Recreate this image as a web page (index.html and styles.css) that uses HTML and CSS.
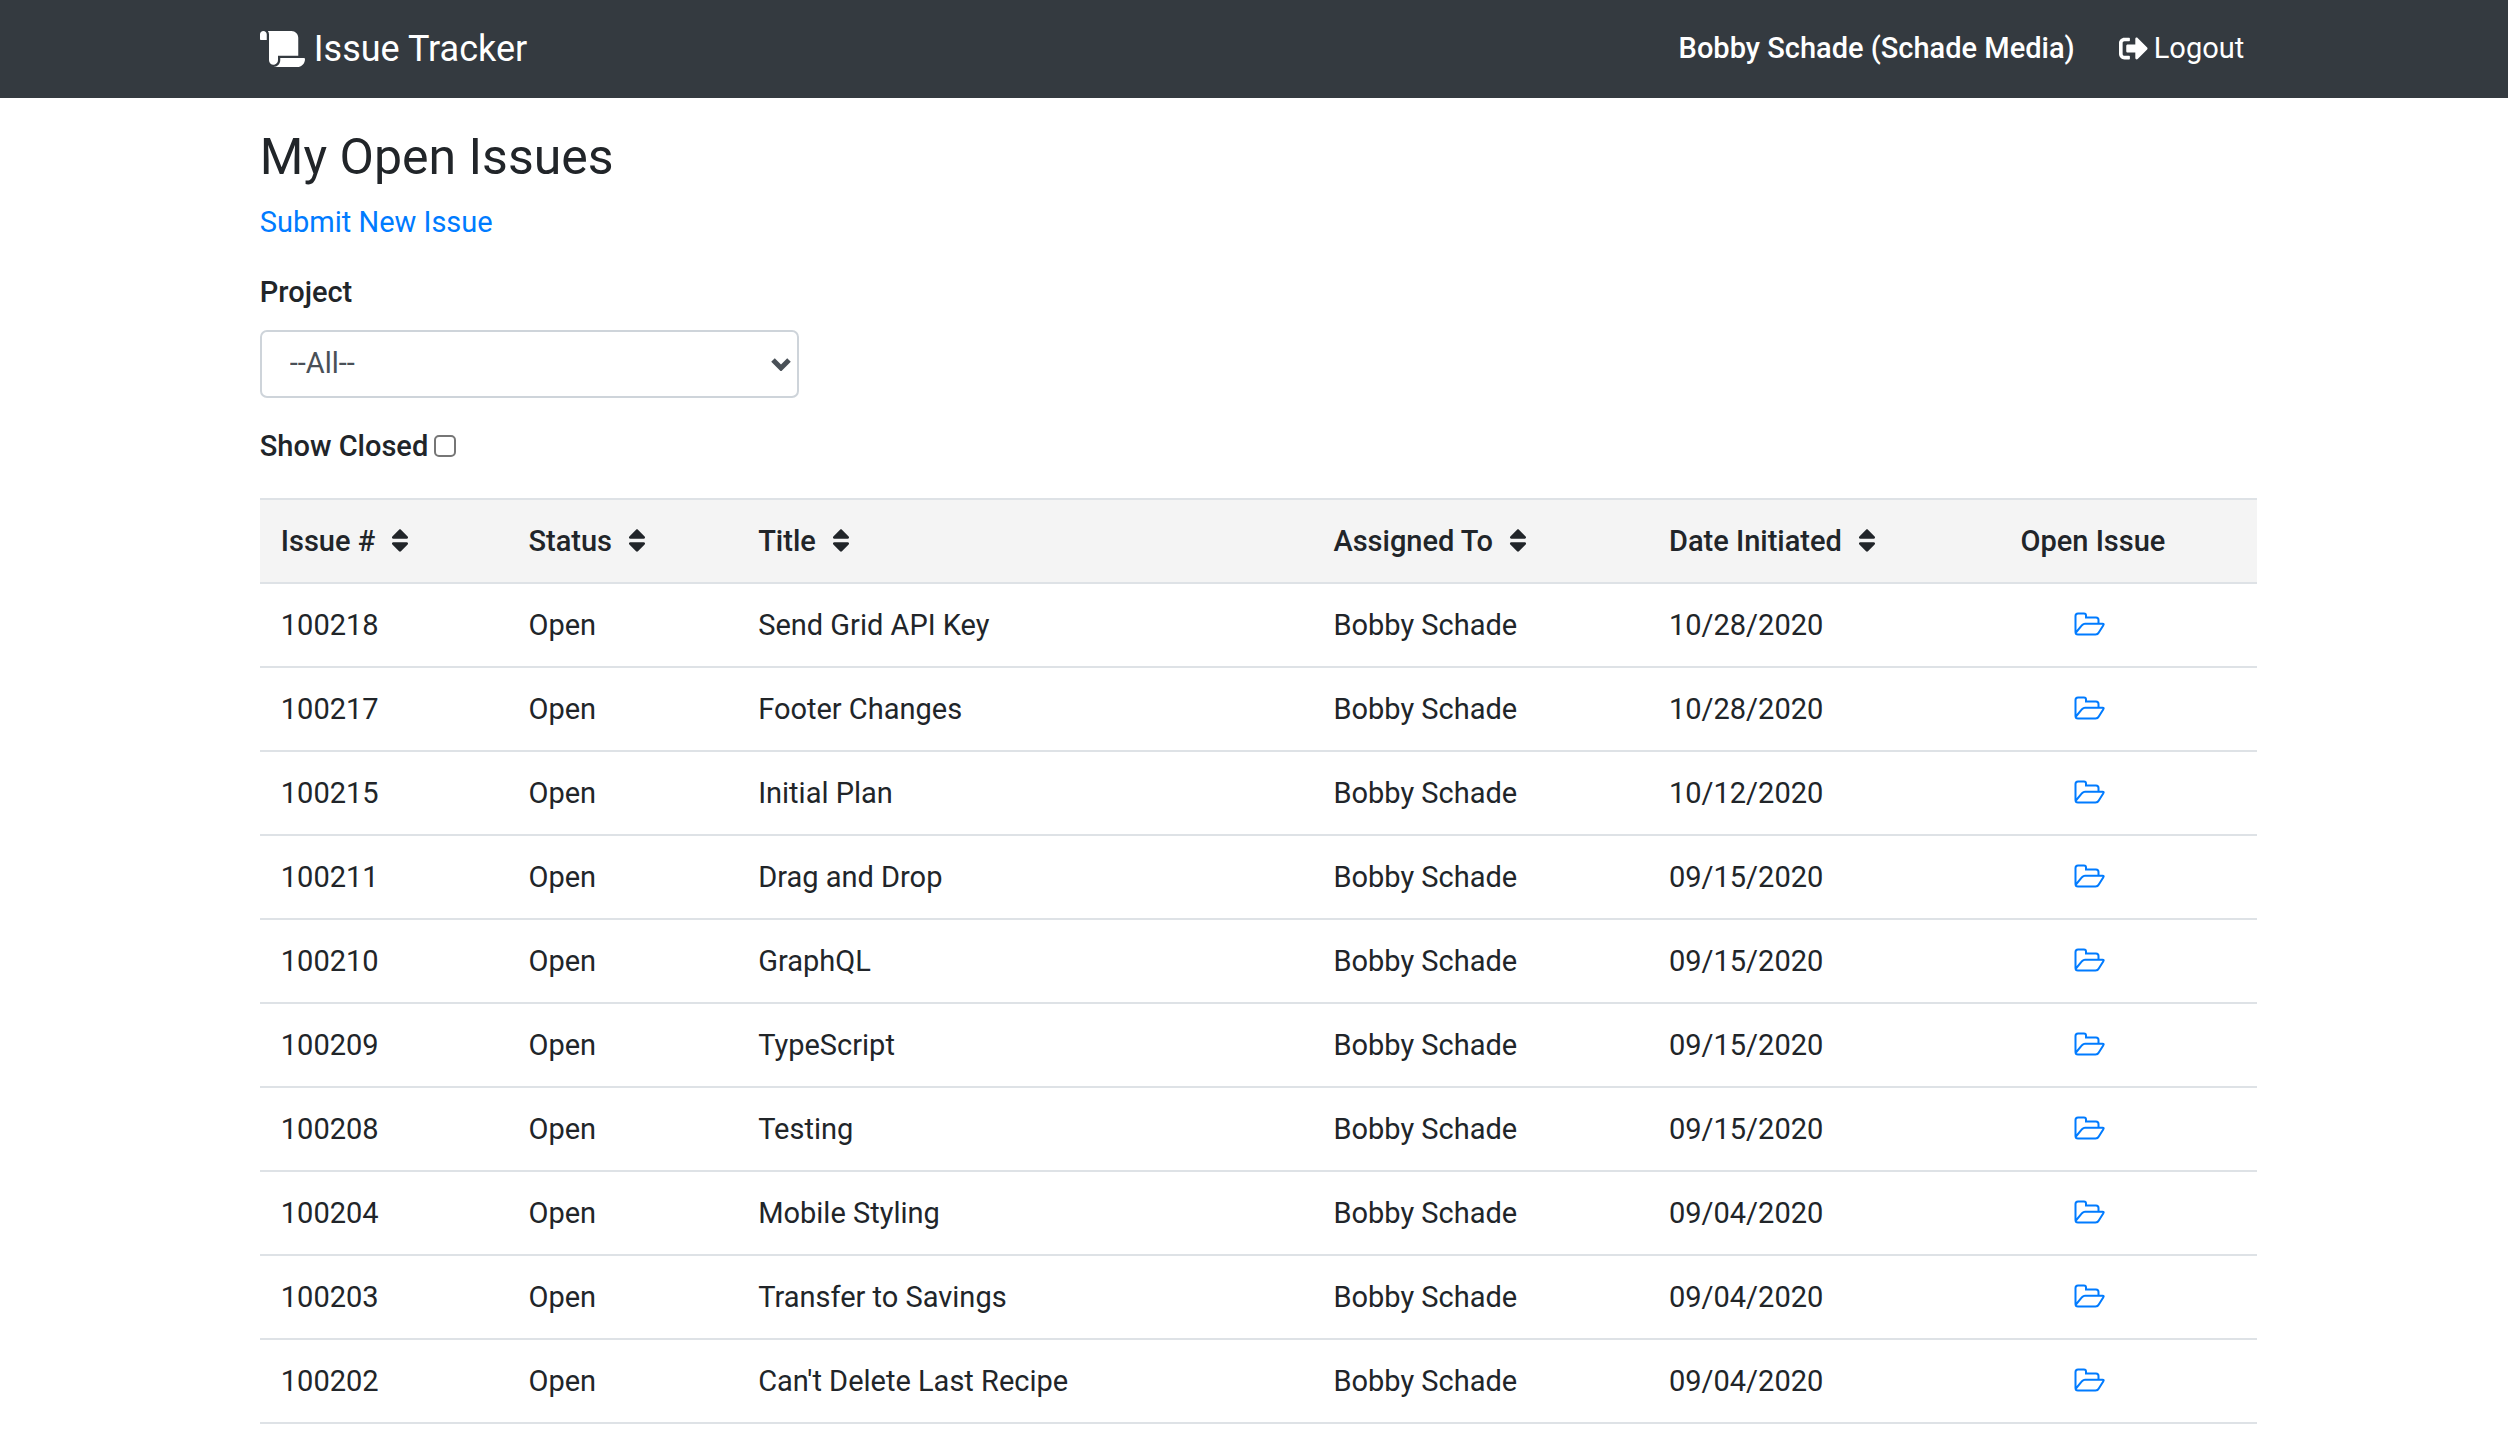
FILE: index.html
```html
<!DOCTYPE html>
<html lang="en">
<head>
<meta charset="utf-8">
<title>Issue Tracker</title>
<link rel="stylesheet" href="styles.css">
</head>
<body>
<svg class="sprite" aria-hidden="true">
  <symbol id="sort" viewBox="0 0 320 512"><path d="M41 288h238c21.400 0 32.100 25.900 17 41L177 448c-9.400 9.400-24.600 9.400-33.900 0L24 329c-15.100-15.100-4.400-41 17-41zm255-105L177 64c-9.400-9.400-24.600-9.400-33.900 0L24 183c-15.100 15.100-4.400 41 17 41h238c21.400 0 32.100-25.900 17-41z"/></symbol>
  <symbol id="folder" viewBox="0 0 31 24"><path d="M1.500 20V4Q1.500 1.500 4 1.500h6Q12 1.500 12 3.500V5.500H22Q24.500 5.500 24.500 8V11.500M1.500 21L8 13.200Q9.400 11.700 11 11.700H28.500Q30.500 11.700 29.200 13.500L24.800 20.500Q23.800 22.500 21.500 22.500H4Q1.500 22.500 1.500 20"/></symbol>
</svg>
<header class="navbar">
  <div class="container navbar-row">
    <a class="brand" href="#">
      <svg class="icon-scroll" viewBox="0 0 640 512" aria-hidden="true"><path d="M48 0C21.530 0 0 21.530 0 48v64c0 8.840 7.160 16 16 16h80V48C96 21.530 74.470 0 48 0zm208 412.570V352h288V96c0-52.940-43.060-96-96-96H111.590C121.740 13.410 128 29.920 128 48v368c0 38.870 34.650 69.650 74.750 63.120C234.220 474 256 444.460 256 412.570zM288 384v32c0 52.930-43.060 96-96 96h336c61.860 0 112-50.140 112-112 0-8.840-7.160-16-16-16H288z"/></svg>
      Issue Tracker
    </a>
    <nav class="user-nav">
      <span class="user">Bobby Schade (Schade Media)</span>
      <a class="logout" href="#">
        <svg class="icon-logout" viewBox="0 0 512 512" aria-hidden="true"><path d="M497 273L329 441c-15 15-41 4.500-41-17v-96H152c-13.300 0-24-10.700-24-24v-96c0-13.300 10.700-24 24-24h136V88c0-21.400 25.900-32 41-17l168 168c9.300 9.400 9.300 24.600 0 34zM192 436v-40c0-6.600-5.400-12-12-12H96c-17.700 0-32-14.300-32-32V160c0-17.700 14.300-32 32-32h84c6.600 0 12-5.400 12-12V76c0-6.600-5.400-12-12-12H96c-53 0-96 43-96 96v192c0 53 43 96 96 96h84c6.600 0 12-5.400 12-12z"/></svg>
        Logout
      </a>
    </nav>
  </div>
</header>
<main class="container">
  <h1 class="title">My Open Issues</h1>
  <a class="link" href="#">Submit New Issue</a>
  <div class="field">
    <label class="label" for="project">Project</label>
    <div class="select-wrap">
      <select class="select" id="project"><option>--All--</option></select>
      <svg class="chevron" viewBox="0 0 20 14" aria-hidden="true"><path d="M2 3l8 8 8-8"/></svg>
    </div>
  </div>
  <div class="check">
    <label class="label" for="closed">Show Closed</label>
    <input class="checkbox" id="closed" type="checkbox">
  </div>
  <table class="issues">
    <colgroup><col class="col-id"><col class="col-status"><col class="col-title"><col class="col-assigned"><col class="col-date"><col class="col-open"></colgroup>
    <thead>
      <tr>
        <th scope="col">Issue #<button class="sort" type="button" aria-label="Sort by issue number"><svg class="icon-sort"><use href="#sort"/></svg></button></th>
        <th scope="col">Status<button class="sort" type="button" aria-label="Sort by status"><svg class="icon-sort"><use href="#sort"/></svg></button></th>
        <th scope="col">Title<button class="sort" type="button" aria-label="Sort by title"><svg class="icon-sort"><use href="#sort"/></svg></button></th>
        <th scope="col">Assigned To<button class="sort" type="button" aria-label="Sort by assignee"><svg class="icon-sort"><use href="#sort"/></svg></button></th>
        <th scope="col">Date Initiated<button class="sort" type="button" aria-label="Sort by date"><svg class="icon-sort"><use href="#sort"/></svg></button></th>
        <th scope="col">Open Issue</th>
      </tr>
    </thead>
    <tbody>
      <tr><td>100218</td><td>Open</td><td>Send Grid API Key</td><td>Bobby Schade</td><td>10/28/2020</td><td class="open"><a class="open-link" href="#" aria-label="Open issue 100218"><svg class="icon-folder"><use href="#folder"/></svg></a></td></tr>
      <tr><td>100217</td><td>Open</td><td>Footer Changes</td><td>Bobby Schade</td><td>10/28/2020</td><td class="open"><a class="open-link" href="#" aria-label="Open issue 100217"><svg class="icon-folder"><use href="#folder"/></svg></a></td></tr>
      <tr><td>100215</td><td>Open</td><td>Initial Plan</td><td>Bobby Schade</td><td>10/12/2020</td><td class="open"><a class="open-link" href="#" aria-label="Open issue 100215"><svg class="icon-folder"><use href="#folder"/></svg></a></td></tr>
      <tr><td>100211</td><td>Open</td><td>Drag and Drop</td><td>Bobby Schade</td><td>09/15/2020</td><td class="open"><a class="open-link" href="#" aria-label="Open issue 100211"><svg class="icon-folder"><use href="#folder"/></svg></a></td></tr>
      <tr><td>100210</td><td>Open</td><td>GraphQL</td><td>Bobby Schade</td><td>09/15/2020</td><td class="open"><a class="open-link" href="#" aria-label="Open issue 100210"><svg class="icon-folder"><use href="#folder"/></svg></a></td></tr>
      <tr><td>100209</td><td>Open</td><td>TypeScript</td><td>Bobby Schade</td><td>09/15/2020</td><td class="open"><a class="open-link" href="#" aria-label="Open issue 100209"><svg class="icon-folder"><use href="#folder"/></svg></a></td></tr>
      <tr><td>100208</td><td>Open</td><td>Testing</td><td>Bobby Schade</td><td>09/15/2020</td><td class="open"><a class="open-link" href="#" aria-label="Open issue 100208"><svg class="icon-folder"><use href="#folder"/></svg></a></td></tr>
      <tr><td>100204</td><td>Open</td><td>Mobile Styling</td><td>Bobby Schade</td><td>09/04/2020</td><td class="open"><a class="open-link" href="#" aria-label="Open issue 100204"><svg class="icon-folder"><use href="#folder"/></svg></a></td></tr>
      <tr><td>100203</td><td>Open</td><td>Transfer to Savings</td><td>Bobby Schade</td><td>09/04/2020</td><td class="open"><a class="open-link" href="#" aria-label="Open issue 100203"><svg class="icon-folder"><use href="#folder"/></svg></a></td></tr>
      <tr><td>100202</td><td>Open</td><td>Can't Delete Last Recipe</td><td>Bobby Schade</td><td>09/04/2020</td><td class="open"><a class="open-link" href="#" aria-label="Open issue 100202"><svg class="icon-folder"><use href="#folder"/></svg></a></td></tr>
    </tbody>
  </table>
</main>
</body>
</html>
```
FILE: styles.css
```css
* {
  box-sizing: border-box;
}

body {
  margin: 0;
  background: #fff;
  color: #212529;
  font-family: Roboto, "Liberation Sans", sans-serif;
  font-size: 29px;
  line-height: 44px;
}

a {
  color: #007bff;
  text-decoration: none;
}

.sprite {
  display: none;
}

.container {
  width: 80%;
  margin: 0 auto;
  padding-left: 9px;
}

/* Top bar */
.navbar {
  background: #343a40;
  color: #fff;
}

.navbar-row {
  display: flex;
  align-items: center;
  justify-content: space-between;
  padding-top: 22px;
  padding-bottom: 22px;
  padding-right: 13px;
}

.brand,
.logout {
  display: flex;
  align-items: center;
  color: #fff;
}

.brand {
  gap: 9px;
  font-size: 36px;
  line-height: 54px;
}

.icon-scroll {
  width: 45px;
  height: 36px;
  fill: currentColor;
}

.user-nav {
  display: flex;
  align-items: center;
  gap: 44px;
  padding-bottom: 2px;
}

.user {
  font-weight: 500;
}

.logout {
  gap: 6px;
}

.icon-logout {
  width: 29px;
  height: 29px;
  fill: currentColor;
}

/* Heading and filters */
.title {
  margin: 28px 0 12px;
  font-size: 50px;
  font-weight: 400;
  line-height: 62px;
}

.link {
  display: block;
}

.label {
  font-weight: 500;
}

.field {
  display: flex;
  flex-direction: column;
  gap: 16px;
  margin-top: 26px;
}

.select-wrap {
  position: relative;
  width: 27%;
}

.select {
  display: block;
  width: 100%;
  height: 68px;
  padding: 0 28px 2px;
  border: 2px solid #ced4da;
  border-radius: 7px;
  background: #fff;
  color: #495057;
  font: inherit;
  line-height: 44px;
  appearance: none;
}

.chevron {
  position: absolute;
  top: 27px;
  right: 8px;
  width: 20px;
  height: 14px;
  fill: none;
  stroke: #495057;
  stroke-width: 5;
  pointer-events: none;
}

.check {
  display: flex;
  align-items: center;
  gap: 6px;
  margin: 26px 0 30px;
}

.checkbox {
  width: 22px;
  height: 22px;
  margin: 0;
  border: 2px solid #767676;
  border-radius: 5px;
  background: #fff;
  appearance: none;
}

.checkbox:checked {
  background: #007bff;
}

/* Issue table */
.issues {
  width: 100%;
  table-layout: fixed;
  border-collapse: collapse;
  border-bottom: 2px solid #dee2e6;
}

.col-id { width: 12.4%; }
.col-status { width: 11.5%; }
.col-title { width: 28.8%; }
.col-assigned { width: 16.8%; }
.col-date { width: 17.6%; }
.col-open { width: 12.9%; }

.issues th,
.issues td {
  height: 84px;
  padding: 0 21px;
  border-top: 2px solid #dee2e6;
  text-align: left;
  white-space: nowrap;
}

.issues th {
  background: #f4f4f4;
  font-weight: 500;
}

.sort {
  margin: 0 0 6px 16px;
  padding: 0;
  border: 0;
  background: none;
  color: inherit;
  line-height: 28px;
  vertical-align: middle;
}

.icon-sort {
  display: block;
  width: 18px;
  height: 29px;
  fill: currentColor;
}

.issues .open {
  padding-bottom: 3px;
  padding-left: 75px;
}

.open-link {
  display: block;
  width: 31px;
}

.icon-folder {
  display: block;
  width: 31px;
  height: 24px;
  fill: none;
  stroke: currentColor;
  stroke-width: 2;
}
```
